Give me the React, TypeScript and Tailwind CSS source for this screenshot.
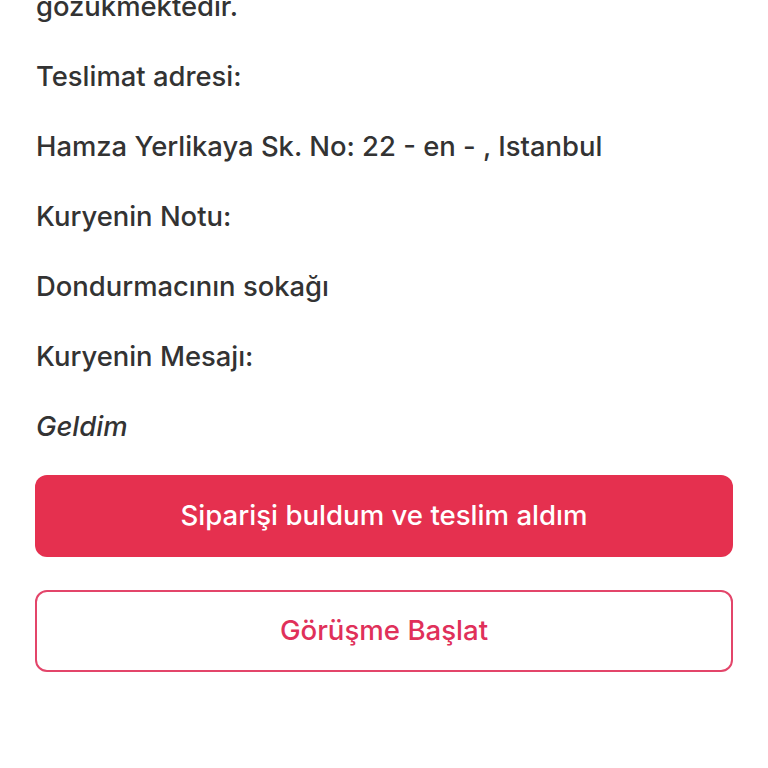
import React from "react";

export default function App() {
  const rows: { t: string; italic?: boolean }[] = [
    { t: "gozukmektedir." },
    { t: "Teslimat adresi:" },
    { t: "Hamza Yerlikaya Sk. No: 22 - en - , Istanbul" },
    { t: "Kuryenin Notu:" },
    { t: "Dondurmacının sokağı" },
    { t: "Kuryenin Mesajı:" },
    { t: "Geldim", italic: true },
  ];
  return (
    <div
      className="w-[768px] h-[768px] overflow-hidden bg-white relative"
      style={{ fontFamily: "Inter, 'Noto Sans', sans-serif" }}
    >
      <div className="flex flex-col px-[36px] mt-[-28px]">
        {rows.map((r, i) => (
          <div
            key={i}
            className={`h-[70px] flex items-center text-[27.4px] font-medium text-[#333333] ${r.italic ? "italic" : ""}`}
          >
            {r.t}
          </div>
        ))}
      </div>
      <div className="flex flex-col px-[35px] mt-[13px] gap-[33px]">
        <button className="h-[82px] w-[698px] rounded-[12px] bg-[#E5304F] text-white text-[27.6px] font-medium flex items-center justify-center">
          Siparişi buldum ve teslim aldım
        </button>
        <button className="h-[82px] w-[698px] rounded-[12px] border-2 border-[#E3456A] bg-white text-[#E0305A] text-[27.6px] font-medium flex items-center justify-center">
          Görüşme Başlat
        </button>
      </div>
    </div>
  );
}
